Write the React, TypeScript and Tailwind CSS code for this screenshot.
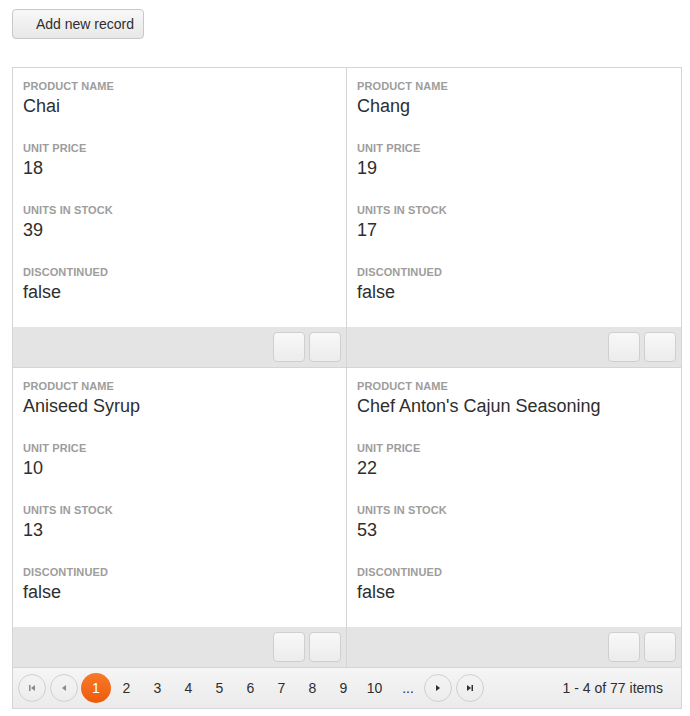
import React from "react";

const items = [
  { name: "Chai", price: 18, stock: 39, disc: "false" },
  { name: "Chang", price: 19, stock: 17, disc: "false" },
  { name: "Aniseed Syrup", price: 10, stock: 13, disc: "false" },
  { name: "Chef Anton's Cajun Seasoning", price: 22, stock: 53, disc: "false" },
];

function Field({ label, value }: { label: string; value: React.ReactNode }) {
  return (
    <div className="h-[62px]">
      <div className="text-[11px] leading-[14px] uppercase text-[#9d9d9d] font-semibold tracking-[0.1px]">{label}</div>
      <div className="text-[18px] leading-[22px] text-[#2e2e2e] mt-[2px]">{value}</div>
    </div>
  );
}

function SmallBtn() {
  return (
    <div className="w-[32px] h-[30px] rounded-[4px] border border-[#cfcfcf] bg-gradient-to-b from-[#f8f8f8] to-[#ececec]" />
  );
}

function Card({ it, right }: { it: (typeof items)[0]; right: boolean }) {
  return (
    <div className={`flex flex-col border-b border-[#d5d5d5] ${right ? "" : "border-r"}`}>
      <div className="pl-[10px] pt-[11px] h-[259px]">
        <Field label="Product Name" value={it.name} />
        <Field label="Unit Price" value={it.price} />
        <Field label="Units In Stock" value={it.stock} />
        <Field label="Discontinued" value={it.disc} />
      </div>
      <div className="h-[40px] bg-[#e4e4e4] flex items-center justify-end gap-[4px] pr-[5px]">
        <SmallBtn />
        <SmallBtn />
      </div>
    </div>
  );
}

function CircleBtn({ children }: { children: React.ReactNode }) {
  return (
    <div className="w-[28px] h-[28px] rounded-full border border-[#d0d0d0] flex items-center justify-center">
      {children}
    </div>
  );
}

export default function App() {
  return (
    <div className="bg-white min-h-[716px] p-[12px] pt-[9px]" style={{ fontFamily: '"Liberation Sans", Arial, sans-serif' }}>
      <button className="h-[30px] w-[132px] rounded-[4px] border border-[#c8c8c8] bg-gradient-to-b from-[#f8f8f8] to-[#e8e8e8] text-[14px] text-[#2e2e2e] pl-[23px] text-left">
        Add new record
      </button>
      <div className="mt-[28px] w-[670px] border border-[#d5d5d5]">
        <div className="grid grid-cols-2">
          {items.map((it, i) => (
            <Card key={i} it={it} right={i % 2 === 1} />
          ))}
        </div>
        <div className="h-[40px] bg-gradient-to-b from-[#f5f5f5] to-[#ebebeb] flex items-center pl-[5px] pr-[18px] text-[14px] text-[#2e2e2e]">
          <div className="flex items-center gap-[4px]">
            <CircleBtn>
              <svg width="8" height="8" viewBox="0 0 8 8"><rect x="1" y="1" width="1.5" height="6" fill="#8a8a8a" /><path d="M7 1 L3 4 L7 7 Z" fill="#8a8a8a" /></svg>
            </CircleBtn>
            <CircleBtn>
              <svg width="8" height="8" viewBox="0 0 8 8"><path d="M6 1 L2 4 L6 7 Z" fill="#8a8a8a" /></svg>
            </CircleBtn>
          </div>
          <div className="flex items-center ml-[3px]">
            <div className="w-[30px] h-[30px] rounded-full bg-gradient-to-b from-[#f87929] to-[#ee5a07] text-white flex items-center justify-center">1</div>
            {[2, 3, 4, 5, 6, 7, 8, 9, 10].map((n) => (
              <div key={n} className="w-[31px] text-center">{n}</div>
            ))}
            <div className="w-[34px] text-center pl-[2px]">...</div>
          </div>
          <div className="flex items-center gap-[4px]">
            <CircleBtn>
              <svg width="8" height="8" viewBox="0 0 8 8"><path d="M2 1 L6 4 L2 7 Z" fill="#2e2e2e" /></svg>
            </CircleBtn>
            <CircleBtn>
              <svg width="8" height="8" viewBox="0 0 8 8"><path d="M1 1 L5 4 L1 7 Z" fill="#2e2e2e" /><rect x="5.5" y="1" width="1.5" height="6" fill="#2e2e2e" /></svg>
            </CircleBtn>
          </div>
          <div className="ml-auto">1 - 4 of 77 items</div>
        </div>
      </div>
    </div>
  );
}
